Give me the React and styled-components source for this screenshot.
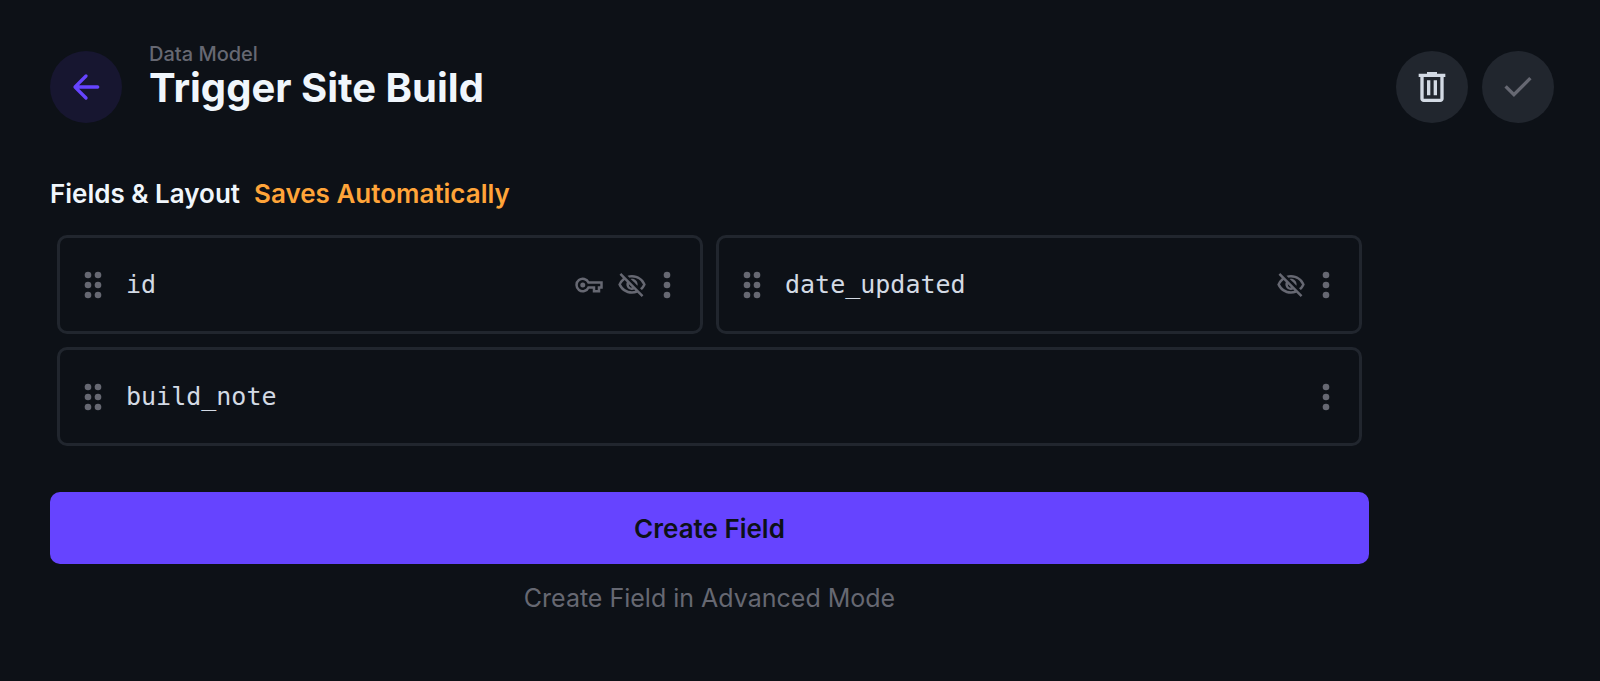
import React from "react";
import styled, { createGlobalStyle } from "styled-components";
import { MdOutlineVisibilityOff } from "react-icons/md";

const fields = [
	{ name: "id", width: "half", primaryKey: true, hidden: true },
	{ name: "date_updated", width: "half", hidden: true },
	{ name: "build_note", width: "full" },
];

const ArrowBackIcon = () => (
	<Icon viewBox="0 0 24 24">
		<path d="M19 11H7.83l4.88-4.88c.39-.39.39-1.03 0-1.42a.996.996 0 0 0-1.41 0l-6.59 6.59a.996.996 0 0 0 0 1.41l6.59 6.59a.996.996 0 1 0 1.41-1.41L7.83 13H19c.55 0 1-.45 1-1s-.45-1-1-1z" />
	</Icon>
);

const DeleteIcon = () => (
	<Icon viewBox="0 0 24 24">
		<path
			fillRule="evenodd"
			d="M7 21q-.825 0-1.412-.587Q5 19.825 5 19V6H4V4h5V3h6v1h5v2h-1v13q0 .825-.587 1.413Q17.825 21 17 21zM17 6H7v13h10zM9 17h2V8H9zm4 0h2V8h-2z"
		/>
	</Icon>
);

const CheckIcon = () => (
	<Icon viewBox="0 0 24 24">
		<path d="m9.55 18-5.7-5.7 1.425-1.425L9.55 15.15l9.175-9.175L20.15 7.4z" />
	</Icon>
);

const DragIcon = () => (
	<Icon viewBox="0 0 24 24" aria-hidden="true">
		<circle cx="9" cy="6" r="2" />
		<circle cx="9" cy="12" r="2" />
		<circle cx="9" cy="18" r="2" />
		<circle cx="15" cy="6" r="2" />
		<circle cx="15" cy="12" r="2" />
		<circle cx="15" cy="18" r="2" />
	</Icon>
);

const MoreIcon = () => (
	<Icon viewBox="0 0 24 24">
		<circle cx="12" cy="6" r="2" />
		<circle cx="12" cy="12" r="2" />
		<circle cx="12" cy="18" r="2" />
	</Icon>
);

const KeyIcon = () => (
	<SmallIcon viewBox="0 0 24 24" role="img" aria-label="Primary key">
		<path
			d="M11.6 10H22v4h-2v3h-4v-3h-4.4A5 5 0 1 1 11.6 10z"
			fill="none"
			stroke="currentColor"
			strokeWidth="2"
		/>
		<circle cx="7" cy="12" r="2" />
	</SmallIcon>
);

const FieldCard = ({ field }) => (
	<Card $full={field.width === "full"}>
		<DragIcon />
		<FieldName>{field.name}</FieldName>
		<Actions>
			{field.primaryKey && <KeyIcon />}
			{field.hidden && (
				<SmallIcon as={MdOutlineVisibilityOff} role="img" aria-label="Hidden" />
			)}
			<MenuButton type="button" aria-label={`${field.name} options`}>
				<MoreIcon />
			</MenuButton>
		</Actions>
	</Card>
);

const App = () => {
	return (
		<Page>
			<GlobalStyle />
			<Header>
				<RoundButton type="button" aria-label="Back" $variant="back">
					<ArrowBackIcon />
				</RoundButton>
				<TitleBox>
					<Breadcrumb href="#data-model">Data Model</Breadcrumb>
					<Title>Trigger Site Build</Title>
				</TitleBox>
				<HeaderActions>
					<RoundButton type="button" aria-label="Delete">
						<DeleteIcon />
					</RoundButton>
					<RoundButton type="button" aria-label="Save" disabled>
						<CheckIcon />
					</RoundButton>
				</HeaderActions>
			</Header>
			<Content>
				<SectionTitle>
					Fields &amp; Layout <Notice>Saves Automatically</Notice>
				</SectionTitle>
				<FieldGrid>
					{fields.map((field) => (
						<FieldCard key={field.name} field={field} />
					))}
				</FieldGrid>
				<CreateButton type="button">Create Field</CreateButton>
				<AdvancedButton type="button">
					Create Field in Advanced Mode
				</AdvancedButton>
			</Content>
		</Page>
	);
};

export default App;

const GlobalStyle = createGlobalStyle`
	* {
		box-sizing: border-box;
	}

	body {
		margin: 0;
		background: #0d1117;
		color: #f0f6fc;
		font-family: Inter, "Liberation Sans", sans-serif;
	}

	button {
		padding: 0;
		border: 0;
		background: none;
		color: inherit;
		font: inherit;
		cursor: pointer;
	}
`;

const Page = styled.main`
	padding: 42px 46px 64px 50px;
`;

const Header = styled.header`
	display: flex;
	align-items: flex-end;
	height: 81px;
`;

const Icon = styled.svg`
	display: block;
	flex: none;
	width: 40px;
	height: 40px;
	fill: currentColor;
`;

const SmallIcon = styled.svg`
	display: block;
	flex: none;
	width: 30px;
	height: 30px;
	fill: currentColor;
`;

const roundColors = {
	back: { background: "#171630", color: "#6644ff" },
	normal: { background: "#21262e", color: "#d3dae4" },
};

const RoundButton = styled.button`
	display: flex;
	flex: none;
	align-items: center;
	justify-content: center;
	width: 72px;
	height: 72px;
	border-radius: 50%;

	&& {
		background: ${({ $variant = "normal" }) => roundColors[$variant].background};
		color: ${({ $variant = "normal" }) => roundColors[$variant].color};
	}

	&&:disabled {
		color: #666872;
		cursor: default;
	}
`;

const TitleBox = styled.div`
	display: flex;
	flex-direction: column;
	align-items: flex-start;
	align-self: flex-start;
	margin-left: 27px;
`;

const Breadcrumb = styled.a`
	color: #666872;
	font-size: 20px;
	font-weight: 500;
	line-height: 24px;
	text-decoration: none;
`;

const Title = styled.h1`
	margin: 0;
	font-size: 40px;
	font-weight: 700;
	line-height: 44px;
`;

const HeaderActions = styled.div`
	display: flex;
	gap: 14px;
	margin-left: auto;
`;

const Content = styled.section`
	max-width: 1319px;
	margin-top: 55px;
`;

const SectionTitle = styled.h2`
	display: flex;
	gap: 14px;
	margin: 0;
	font-size: 26px;
	font-weight: 600;
	line-height: 32px;
`;

const Notice = styled.span`
	color: #ffa439;
`;

const FieldGrid = styled.div`
	display: grid;
	grid-template-columns: 1fr 1fr;
	gap: 13px;
	margin-top: 25px;
	padding: 0 7px;
`;

const Card = styled.div`
	display: flex;
	align-items: center;
	grid-column: ${({ $full }) => ($full ? "1 / -1" : "auto")};
	height: 99px;
	padding: 0 13px;
	border: 3px solid #21262e;
	border-radius: 10px;
	color: #666872;
`;

const FieldName = styled.span`
	margin-left: 13px;
	color: #d3dae4;
	font-family: "DejaVu Sans Mono", monospace;
	font-size: 25px;
	line-height: 32px;
`;

const Actions = styled.div`
	display: flex;
	align-items: center;
	gap: 13px;
	margin-left: auto;
`;

const MenuButton = styled.button`
	margin-left: -13px;
`;

const CreateButton = styled.button`
	&& {
		display: block;
		width: 100%;
		height: 72px;
		margin-top: 46px;
		border-radius: 10px;
		background: #6644ff;
		color: #0d1117;
		font-size: 26px;
		font-weight: 600;
	}
`;

const AdvancedButton = styled.button`
	&& {
		display: block;
		margin: 18px auto 0;
		color: #666872;
		font-size: 25px;
		font-weight: 400;
		line-height: 32px;
	}
`;
